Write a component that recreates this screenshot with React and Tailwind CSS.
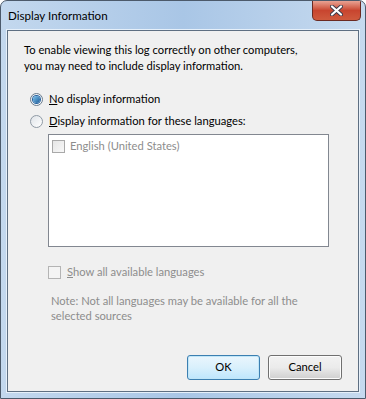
export default function App() {
  return (
    <div
      className="relative w-[366px] h-[399px] rounded-t-[7px] border border-[#4c5a6b] bg-gradient-to-r from-[#c3d8ee] via-[#a9c6e6] to-[#c6daef] overflow-hidden"
      style={{ fontFamily: 'Lato, "Noto Sans", sans-serif' }}
    >
      {/* title bar */}
      <div className="h-[29px] flex items-center pl-[7px] text-[11.6px] text-black">Display Information</div>
      <button className="absolute top-0 right-[4px] w-[49px] h-[20px] rounded-b-[5px] border border-t-0 border-[#6b2a22] bg-gradient-to-b from-[#e8a293] via-[#c8452f] to-[#cf5a3e] flex items-center justify-center">
        <svg width="13" height="11" viewBox="0 0 13 11">
          <path d="M2 1.5 L11 9.5 M11 1.5 L2 9.5" stroke="#3b3b4b" strokeWidth="4" strokeLinecap="round" />
          <path d="M2 1.5 L11 9.5 M11 1.5 L2 9.5" stroke="#ffffff" strokeWidth="2.2" strokeLinecap="round" />
        </svg>
      </button>

      {/* client area */}
      <div className="mx-[6px] h-[362px] border border-[#5e6f82] bg-[#f0f0f0] shadow-[0_0_0_1px_#e6f0fa] text-[11.2px] text-black">
        <div className="pl-[16px] pt-[11px] leading-[16px]">
          <p>To enable viewing this log correctly on other computers,</p>
          <p>you may need to include display information.</p>
        </div>

        <div className="pl-[22px] pt-[17px] flex flex-col gap-[6px]">
          <label className="flex items-center gap-[6px] h-[16px]">
            <span className="w-[13px] h-[13px] rounded-full border border-[#6a7b8c] bg-gradient-to-br from-[#e8ecf0] to-[#ffffff] flex items-center justify-center">
              <span className="w-[7px] h-[7px] rounded-full bg-gradient-to-br from-[#7cc4ee] to-[#1b5b98] shadow-[0_0_0_1px_#25609e]" />
            </span>
            <span><u>N</u>o display information</span>
          </label>
          <label className="flex items-center gap-[6px] h-[16px]">
            <span className="w-[13px] h-[13px] rounded-full border border-[#8f9aa5] bg-gradient-to-br from-[#dfe3e8] to-[#ffffff]" />
            <span><u>D</u>isplay information for these languages:</span>
          </label>
        </div>

        <div className="ml-[40px] mt-[5px] w-[281px] h-[113px] border border-[#828790] bg-white p-[3px]">
          <div className="flex items-center gap-[5px] text-[#8d8d8d] h-[16px]">
            <span className="w-[13px] h-[13px] border border-[#a9a9a9] bg-gradient-to-br from-[#e6e6e6] to-[#f8f8f8]" />
            <span>English (United States)</span>
          </div>
        </div>

        <label className="ml-[40px] mt-[17px] flex items-center gap-[6px] h-[16px] text-[#8d8d8d]">
          <span className="w-[13px] h-[13px] border border-[#b4b4b4] bg-[#f4f4f4]" />
          <span><u>S</u>how all available languages</span>
        </label>

        <p className="ml-[43px] mt-[13px] w-[270px] leading-[15px] text-[#8d8d8d]">
          Note: Not all languages may be available for all the selected sources
        </p>

        <div className="flex justify-end gap-[8px] pr-[16px] mt-[32px]">
          <button className="w-[73px] h-[25px] rounded-[3px] border border-[#3c7fb1] bg-gradient-to-b from-[#eaf6fd] via-[#d9f0fc] to-[#bee6fd] shadow-[inset_0_0_0_1px_#c0e6f8]">
            OK
          </button>
          <button className="w-[74px] h-[25px] rounded-[3px] border border-[#707070] bg-gradient-to-b from-[#f2f2f2] via-[#ebebeb] to-[#cfcfcf] shadow-[inset_0_0_0_1px_#fcfcfc]">
            Cancel
          </button>
        </div>
      </div>
    </div>
  );
}
